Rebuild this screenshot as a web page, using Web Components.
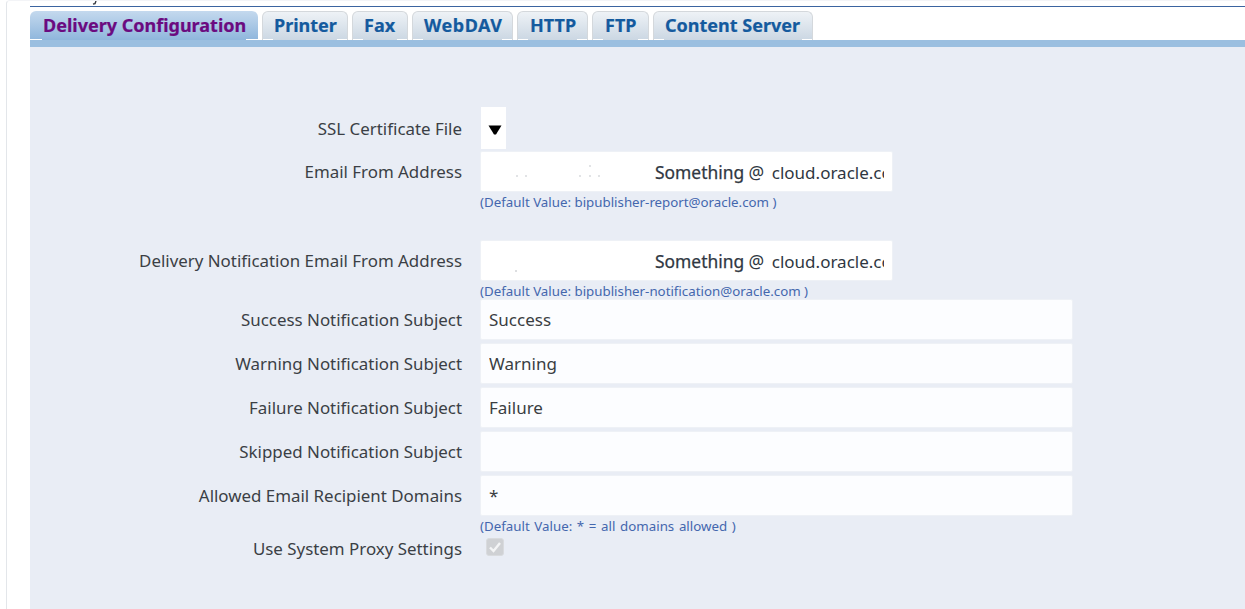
<!DOCTYPE html>
<html><head><meta charset="utf-8"><style>
html,body{margin:0;padding:0;background:#fff;height:100%;overflow:hidden}
body{font-family:"Noto Sans","DejaVu Sans",sans-serif}
</style></head><body>
<template id="t-page"><style>
:host{display:block;width:1239px;height:609px;box-sizing:border-box;border-left:1px solid #e3e6ea;border-top:1px solid #f3f4f7;border-top-left-radius:4px;margin-left:6px;padding:5px 0 0 23px;position:relative;overflow:hidden;background:#fff}
.rule{height:1px;background:#3b64a0;margin-bottom:4px}
.panel{background:#e9edf5;height:562px;padding-top:60px;box-sizing:border-box}
.mark{position:absolute;left:85px;top:0;width:6px;height:4px}
</style><svg class="mark" viewBox="0 0 6 4"><path d="M1 3 L3 2.6 L4 0" stroke="#34383f" stroke-width="1.4" fill="none"/></svg>
<div class="rule"></div><slot name="tabs"></slot><div class="panel"><slot></slot></div></template>

<template id="t-tabs"><style>
:host{display:flex;gap:4px;align-items:flex-end;height:29px;border-bottom:7px solid #9bbfe0;width:1215px;box-sizing:content-box}
</style><slot></slot></template>

<template id="t-tab"><style>
:host{display:block;position:relative;height:29px;width:var(--w);padding-left:var(--pl,11px);box-sizing:border-box;border:1px solid #d4d8dc;border-bottom:0;border-radius:6px 6px 0 0;background:linear-gradient(#eef2f6,#cbd7e3);color:#145a9e;font:700 18px/26px "Noto Sans","DejaVu Sans",sans-serif;-webkit-text-stroke:.2px currentColor;white-space:nowrap}
:host([active]){padding-left:13px;border:0;background:linear-gradient(#c4d9ee,#8fb6dc);color:#6b0a80;line-height:28px}
.c{position:absolute;bottom:0;height:1px;width:var(--c,10px);background:#fff}
.a{left:0}.b{right:0}
</style><slot></slot><i class="c a"></i><i class="c b"></i></template>

<template id="t-row"><style>
:host{display:grid;grid-template-columns:432px 1fr;column-gap:18px;align-items:start;margin-bottom:var(--mb,3px)}
.l{font-size:16.9px;color:#3b3f45;text-align:right;height:0;line-height:var(--lh,41px);white-space:nowrap}
</style><div class="l"><slot name="label"></slot></div><div><slot></slot><slot name="help"></slot></div></template>

<template id="t-help"><style>
:host{display:block;font-size:13.3px;line-height:18px;padding-top:1px;color:#4467ae;white-space:nowrap}
</style><slot></slot></template>

<template id="t-input"><style>
:host{display:block;height:41px;box-sizing:border-box;background:#fcfdff;border-radius:2px;border:1px solid #eef1f6;width:var(--w,593px);padding-left:8px;font-size:17px;line-height:39px;color:#3a3d42;white-space:nowrap;overflow:hidden}
:host([narrow]){--w:413px;padding-left:174px;padding-right:8px;line-height:41px;font-size:17.4px;color:#2f3742;background-color:#fff;background-repeat:no-repeat;background-image:var(--specks,none)}
.clip{display:block;overflow:hidden;height:100%}
</style><span class="clip"><slot></slot></span></template>

<template id="t-email"><style>
:host{display:inline}
b{font-weight:400;-webkit-text-stroke:.25px currentColor}
i{font-style:normal;font-size:17px;margin-left:3px}
</style><b>Something</b> @ <i>cloud.oracle.com</i></template>

<template id="t-select"><style>
:host{display:flex;width:25px;height:42px;margin-left:1px;background:#fff;align-items:flex-start;padding:18px 0 0 7px;box-sizing:border-box}
</style><svg width="14" height="10" viewBox="0 0 14 10"><path d="M0.5 0.5H13.5L8 9.5H6Z" fill="#000"/></svg></template>

<template id="t-check"><style>
:host{display:block;width:18px;height:18px;margin:0 0 0 6px;background:#cfd1d4;border-radius:3px;border:1px solid #d9dbde;box-sizing:border-box}
svg{display:block}
</style><svg width="16" height="16" viewBox="0 0 16 16"><path d="M3 8.5L6.5 12L13 4" fill="none" stroke="#f4f5f6" stroke-width="2.4"/></svg></template>

<x-page>
<x-tabs slot="tabs">
<x-tab active style="--w:228px;--c:12px">Delivery Configuration</x-tab><x-tab style="--w:86px">Printer</x-tab><x-tab style="--w:56px">Fax</x-tab><x-tab style="--w:101px;letter-spacing:.5px">WebDAV</x-tab><x-tab style="--w:71px;--pl:12px">HTTP</x-tab><x-tab style="--w:57px;--pl:12px">FTP</x-tab><x-tab style="--w:160px">Content Server</x-tab>
</x-tabs>
<x-row style="--mb:2px;--lh:43px"><span slot="label">SSL Certificate File</span><x-select></x-select></x-row>
<x-row style="--mb:29px"><span slot="label">Email From Address</span><x-input narrow style="--specks:radial-gradient(circle 1px at 36px 24px,#9aa0a8,transparent),radial-gradient(circle 1px at 45px 24px,#9aa0a8,transparent),radial-gradient(circle 1px at 99px 24px,#9aa0a8,transparent),radial-gradient(circle 1px at 109px 24px,#9aa0a8,transparent),radial-gradient(circle 1px at 118px 24px,#9aa0a8,transparent),radial-gradient(circle 1px at 109px 14px,#9aa0a8,transparent)"><x-email></x-email></x-input><x-help slot="help">(Default Value: bipublisher-report@oracle.com )</x-help></x-row>
<x-row style="--mb:-1px"><span slot="label">Delivery Notification Email From Address</span><x-input narrow style="--specks:radial-gradient(circle 1px at 35px 30px,#8a9098,transparent)"><x-email></x-email></x-input><x-help slot="help">(Default Value: bipublisher-notification@oracle.com )</x-help></x-row>
<x-row><span slot="label">Success Notification Subject</span><x-input>Success</x-input></x-row>
<x-row><span slot="label">Warning Notification Subject</span><x-input>Warning</x-input></x-row>
<x-row><span slot="label">Failure Notification Subject</span><x-input>Failure</x-input></x-row>
<x-row><span slot="label">Skipped Notification Subject</span><x-input></x-input></x-row>
<x-row><span slot="label">Allowed Email Recipient Domains</span><x-input>*</x-input><x-help slot="help" style="word-spacing:1.2px">(Default Value: * = all domains allowed )</x-help></x-row>
<x-row style="--lh:22px"><span slot="label">Use System Proxy Settings</span><x-check></x-check></x-row>
</x-page>
<script>
function def(n,t){customElements.define(n,class extends HTMLElement{constructor(){super();this.attachShadow({mode:'open'}).appendChild(document.getElementById(t).content.cloneNode(true));}});}
def('x-page','t-page');def('x-tabs','t-tabs');def('x-tab','t-tab');def('x-row','t-row');def('x-help','t-help');def('x-input','t-input');def('x-email','t-email');def('x-select','t-select');def('x-check','t-check');
</script>
</body></html>
